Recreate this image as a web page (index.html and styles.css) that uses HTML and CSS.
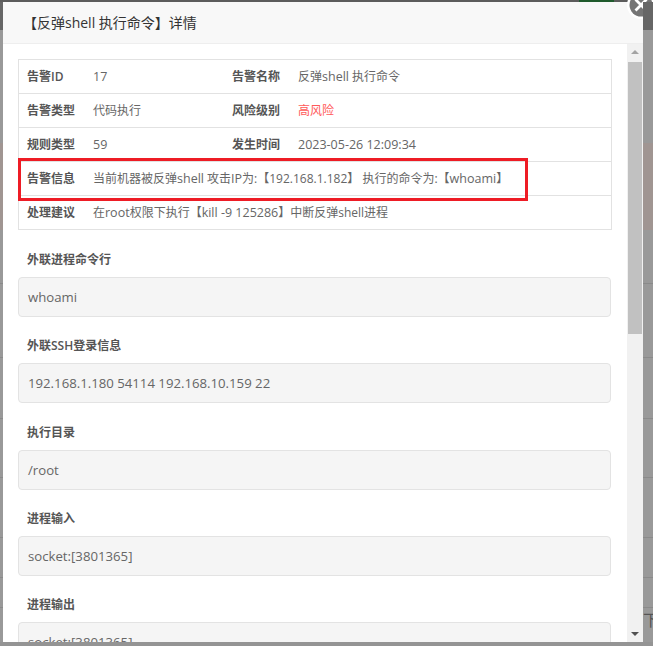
FILE: index.html
```html
<!DOCTYPE html>
<html lang="zh">
<head>
<meta charset="utf-8">
<title>详情</title>
<link rel="stylesheet" href="styles.css">
</head>
<body>
<div class="backdrop">
  <div class="strip top"></div>
  <div class="middle">
    <div class="strip left"></div>
    <div class="modal">
      <div class="modal-header">【反弹shell 执行命令】详情</div>
      <div class="modal-body">
        <div class="content">
          <div class="table">
            <div class="row">
              <div class="th first">告警ID</div><div class="td v1"><span class="lat">17</span></div>
              <div class="th second">告警名称</div><div class="td">反弹<span class="lat">shell</span> 执行命令</div>
            </div>
            <div class="row">
              <div class="th first">告警类型</div><div class="td v1">代码执行</div>
              <div class="th second">风险级别</div><div class="td danger">高风险</div>
            </div>
            <div class="row">
              <div class="th first">规则类型</div><div class="td v1"><span class="lat">59</span></div>
              <div class="th second">发生时间</div><div class="td"><span class="lat">2023-05-26 12:09:34</span></div>
            </div>
            <div class="row">
              <div class="th first">告警信息</div><div class="td">当前机器被反弹<span class="lat">shell</span> 攻击<span class="lat">IP</span>为:【192.168.1.182】 执行的命令为:【<span class="lat">whoami</span>】</div>
            </div>
            <div class="row">
              <div class="th first">处理建议</div><div class="td">在<span class="lat">root</span>权限下执行【<span class="lat">kill -9 125286</span>】中断反弹shell进程</div>
            </div>
            <div class="highlight"></div>
          </div>
          <div class="field"><div class="label">外联进程命令行</div><div class="box">whoami</div></div>
          <div class="field"><div class="label">外联SSH登录信息</div><div class="box">192.168.1.180 54114 192.168.10.159 22</div></div>
          <div class="field"><div class="label">执行目录</div><div class="box">/root</div></div>
          <div class="field"><div class="label">进程输入</div><div class="box">socket:[3801365]</div></div>
          <div class="field"><div class="label">进程输出</div><div class="box">socket:[3801365]</div></div>
        </div>
        <div class="scrollbar">
          <div class="arrow up"></div>
          <div class="track"><div class="thumb"></div></div>
          <div class="arrow down"></div>
        </div>
      </div>
      <div class="close"><svg viewBox="0 0 28 28" width="28" height="28"><circle cx="14" cy="14" r="14" fill="#fff"/><circle cx="14" cy="14" r="11.5" fill="#757575"/><path d="M8.5 8.5l11 11M19.5 8.5l-11 11" stroke="#fff" stroke-width="2.8"/></svg></div>
    </div>
    <div class="strip right"><span class="peek">下</span></div>
  </div>
  <div class="strip bottom"></div>
</div>
</body>
</html>
```
FILE: styles.css
```css
* { box-sizing: border-box; }
html, body { margin: 0; padding: 0; height: 100%; overflow: hidden; }
body { font-family: "Open Sans", "Noto Sans CJK SC", sans-serif; font-size: 12px; color: #666; }
.backdrop { width: 653px; height: 646px; background: #999; display: flex; flex-direction: column; }
.strip { flex: none; }
.top { height: 2px; background: linear-gradient(to right, #5c5c5c 579px, #1f5a2c 579px, #1f5a2c 614px, #5c5c5c 614px); }
.bottom { height: 4px; background: #949494; }
.left, .right {
  background:
    linear-gradient(#8a8a8a, #8a8a8a) 0 281px / 100% 1px no-repeat,
    linear-gradient(#8a8a8a, #8a8a8a) 0 355px / 100% 1px no-repeat,
    linear-gradient(#8a8a8a, #8a8a8a) 0 416px / 100% 1px no-repeat,
    linear-gradient(#8a8a8a, #8a8a8a) 0 475px / 100% 1px no-repeat,
    linear-gradient(#8a8a8a, #8a8a8a) 0 535px / 100% 1px no-repeat,
    linear-gradient(#8a8a8a, #8a8a8a) 0 575px / 100% 1px no-repeat,
    linear-gradient(#8a8a8a, #8a8a8a) 0 605px / 100% 1px no-repeat,
    linear-gradient(to bottom, #666 28px, #999 28px, #999 141px, #a09592 141px, #a09592 228px, #999 228px);
}
.left { width: 3px; }
.right { width: 10px; overflow: hidden; position: relative; }
.peek { position: absolute; left: 0; top: 608px; font-size: 16px; line-height: 20px; color: #555; }
.middle { display: flex; height: 640px; }
.modal { position: relative; width: 640px; height: 640px; background: #fff; display: flex; flex-direction: column; }
.modal-header { height: 42px; flex: none; background: #f8f8f8; border-bottom: 1px solid #eee; padding-left: 20px; font-size: 14px; line-height: 41px; color: #333; }
.modal-body { flex: 1; display: flex; min-height: 0; }
.content { width: 624px; padding: 15px 15px 0; overflow: hidden; }
.table { position: relative; width: 594px; border: 1px solid #e2e2e2; border-bottom: 0; margin-bottom: 20px; }
.row { display: flex; height: 34px; border-bottom: 1px solid #e2e2e2; line-height: 33px; }
.th { font-weight: 600; color: #555; padding-left: 8px; flex: none; width: 74px; }
.th.second { width: 66px; padding-left: 0; }
.td { color: #666; white-space: nowrap; }
.lat { font-size: 12.5px; }
.v1 { width: 139px; flex: none; }
.danger { color: #ff5a5a; }
.highlight { position: absolute; left: -1px; top: 98px; width: 510px; height: 43px; border: 3px solid #ee1c25; }
.field { padding-bottom: 19.3px; }
.label { font-weight: 600; color: #555; padding-left: 9px; line-height: 19px; margin-bottom: 8px; }
.box { height: 40px; line-height: 39px; background: #f5f5f5; border: 1px solid #e3e3e3; border-radius: 4px; padding-left: 9px; font-size: 13.2px; color: #666; width: 593px; }
.scrollbar { width: 16px; background: #f1f1f1; display: flex; flex-direction: column; }
.arrow { height: 16px; flex: none; display: flex; align-items: center; justify-content: center; }
.arrow.up::before { content: ""; border: 4px solid transparent; border-top: 0; border-bottom: 4px solid #a3a3a3; }
.arrow.down::before { content: ""; border: 4px solid transparent; border-bottom: 0; border-top: 4px solid #505050; }
.track { flex: 1; padding: 2px 1px 0; }
.thumb { height: 272px; background: #c1c1c1; }
.close { position: absolute; right: -12px; top: -11px; width: 28px; height: 28px; }
.close svg { display: block; }
```
